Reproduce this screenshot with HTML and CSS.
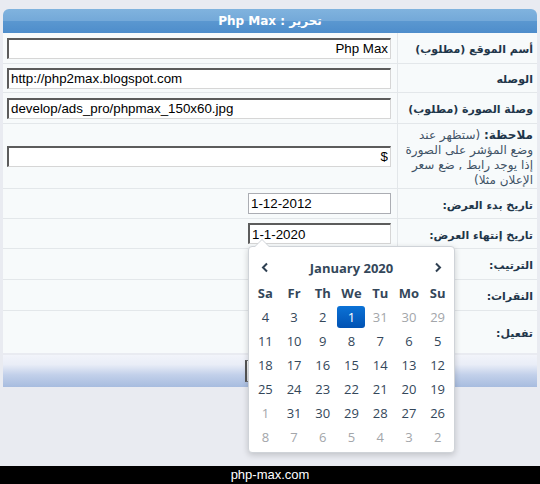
FILE: index.html
```html
<!DOCTYPE html>
<html lang="ar">
<head>
<meta charset="utf-8">
<title>تحرير</title>
<link rel="stylesheet" href="styles.css">
</head>
<body>
<div class="page">
  <div class="box" dir="rtl">
    <div class="box-head">تحرير : Php Max</div>
    <div class="form">
      <div class="lbl">أسم الموقع (مطلوب)</div>
      <div class="fld"><input class="txt" value="Php Max"></div>

      <div class="lbl">الوصله</div>
      <div class="fld"><input class="txt" dir="ltr" value="http://php2max.blogspot.com"></div>

      <div class="lbl">وصلة الصورة (مطلوب)</div>
      <div class="fld"><input class="txt" dir="ltr" value="develop/ads_pro/phpmax_150x60.jpg"></div>

      <div class="lbl note"><b>ملاحظة:</b> (ستظهر عند<br>وضع المؤشر على الصورة<br>إذا يوجد رابط , ضع سعر<br>الإعلان مثلا)</div>
      <div class="fld"><input class="txt" value="$"></div>

      <div class="lbl">تاريخ بدء العرض:</div>
      <div class="fld"><input class="date" dir="ltr" value="1-12-2012"></div>

      <div class="lbl">تاريخ إنتهاء العرض:</div>
      <div class="fld"><input class="date active" dir="ltr" value="1-1-2020"></div>

      <div class="lbl">الترتيب:</div>
      <div class="fld"></div>

      <div class="lbl">النقرات:</div>
      <div class="fld"></div>

      <div class="lbl last">تفعيل:</div>
      <div class="fld last"></div>
    </div>
  </div>
  <div class="bar"><button class="btn" type="button" aria-label="حفظ"></button></div>
</div>
<div class="footer">php-max.com</div>

<div class="cal">
  <div class="cal-grid">
    <div class="nav"><svg width="8" height="11" viewBox="0 0 8 11"><polyline points="6,1.5 2,5.5 6,9.5" fill="none" stroke="#2f4052" stroke-width="2"/></svg></div>
    <div class="month">January 2020</div>
    <div class="nav"><svg width="8" height="11" viewBox="0 0 8 11"><polyline points="2,1.5 6,5.5 2,9.5" fill="none" stroke="#2f4052" stroke-width="2"/></svg></div>

    <div class="dn">Sa</div><div class="dn">Fr</div><div class="dn">Th</div><div class="dn">We</div><div class="dn">Tu</div><div class="dn">Mo</div><div class="dn">Su</div>

    <div class="d">4</div><div class="d">3</div><div class="d">2</div><div class="d"><span class="sel">1</span></div><div class="d o">31</div><div class="d o">30</div><div class="d o">29</div>
    <div class="d">11</div><div class="d">10</div><div class="d">9</div><div class="d">8</div><div class="d">7</div><div class="d">6</div><div class="d">5</div>
    <div class="d">18</div><div class="d">17</div><div class="d">16</div><div class="d">15</div><div class="d">14</div><div class="d">13</div><div class="d">12</div>
    <div class="d">25</div><div class="d">24</div><div class="d">23</div><div class="d">22</div><div class="d">21</div><div class="d">20</div><div class="d">19</div>
    <div class="d o">1</div><div class="d">31</div><div class="d">30</div><div class="d">29</div><div class="d">28</div><div class="d">27</div><div class="d">26</div>
    <div class="d o">8</div><div class="d o">7</div><div class="d o">6</div><div class="d o">5</div><div class="d o">4</div><div class="d o">3</div><div class="d o">2</div>
  </div>
</div>
</body>
</html>
```

FILE: styles.css
```css
html, body {
  margin: 0;
  padding: 0;
}
body {
  width: 540px;
  height: 484px;
  background: #e9ebf1;
  display: flex;
  flex-direction: column;
  font-family: "DejaVu Sans", sans-serif;
  position: relative;
  overflow: hidden;
}
.page {
  flex: 1;
  padding: 9px 3px 0;
}
.box-head {
  height: 24px;
  line-height: 24px;
  border-radius: 6px 6px 0 0;
  background: linear-gradient(#80b3de 0%, #74a9d9 48%, #5a97d0 52%, #4e8dcb 100%);
  color: #fff;
  font-weight: bold;
  font-size: 12px;
  text-align: center;
}
.form {
  display: grid;
  grid-template-columns: 140px 1fr;
  grid-template-rows: 31px 29px 31px 65px 30px 30px 31px 31px 42px;
  background: #f7fafb;
}
.lbl {
  border-left: 1px solid #e3e7ea;
  border-bottom: 1px solid #e3e7ea;
  padding: 3px 4px 0 4px;
  display: flex;
  align-items: center;
  font-size: 11px;
  font-weight: bold;
  color: #1f364a;
  white-space: nowrap;
}
.lbl.note {
  display: block;
  padding-top: 4px;
  font-size: 12px;
  font-weight: normal;
  line-height: 15px;
  color: #3f5366;
  white-space: normal;
}
.lbl.note b {
  color: #1f364a;
}
.fld {
  border-bottom: 1px solid #e3e7ea;
  padding: 0 6px 0 4px;
  display: flex;
  align-items: center;
}
.lbl.last, .fld.last {
  border-bottom: none;
}
.txt, .date {
  font-family: "Liberation Sans", Arial, sans-serif;
  font-size: 13.33px;
  color: #000;
  background: #fff;
  box-sizing: border-box;
  margin: 0;
  padding: 1px 2px;
  outline: none;
}
.txt {
  width: 100%;
  height: 21px;
  border-top: 2px solid #5c5c5c;
  border-left: 2px solid #5c5c5c;
  border-right: 1px solid #d6d6d6;
  border-bottom: 1px solid #d6d6d6;
}
.date {
  width: 143px;
  height: 21px;
  border: 1px solid #abadb3;
}
.date.active {
  border-top: 2px solid #5c5c5c;
  border-left: 2px solid #5c5c5c;
  border-right: 1px solid #d6d6d6;
  border-bottom: 1px solid #d6d6d6;
}
.bar {
  margin-top: 2px;
  height: 32px;
  background: linear-gradient(#f2f4fa 0%, #e9edf7 30%, #c2d0ea 62%, #a7bcdf 100%);
  display: flex;
  justify-content: center;
  align-items: center;
}
.btn {
  width: 50px;
  height: 22px;
  margin: 0;
  border: 1px solid #707070;
  border-left: 2px solid #555;
  background: linear-gradient(#fbfbfb, #dcdcdc);
}
.footer {
  height: 18px;
  line-height: 18px;
  background: #000;
  color: #fff;
  text-align: center;
  font-family: "Liberation Sans", Arial, sans-serif;
  font-size: 13px;
}
.cal {
  position: absolute;
  left: 248px;
  top: 246px;
  width: 207px;
  height: 207px;
  box-sizing: border-box;
  background: #fff;
  border: 1px solid #cfd3d8;
  border-radius: 4px;
  box-shadow: 0 2px 6px rgba(0, 0, 0, 0.18);
  padding: 7px 2px 3px;
  font-family: "Open Sans", "Noto Sans", sans-serif;
  font-size: 13px;
  color: #34475a;
}
.cal::before {
  content: "";
  position: absolute;
  left: 5px;
  top: -8px;
  border-left: 8px solid transparent;
  border-right: 8px solid transparent;
  border-bottom: 8px solid #cfd3d8;
}
.cal::after {
  content: "";
  position: absolute;
  left: 6px;
  top: -7px;
  border-left: 7px solid transparent;
  border-right: 7px solid transparent;
  border-bottom: 7px solid #fff;
}
.cal-grid {
  display: grid;
  grid-template-columns: repeat(7, 1fr);
  grid-template-rows: 27px 24px repeat(6, 24px);
}
.nav {
  display: flex;
  align-items: center;
  justify-content: center;
}
.month {
  grid-column: span 5;
  display: flex;
  align-items: center;
  justify-content: center;
  font-weight: bold;
}
.dn {
  display: flex;
  align-items: center;
  justify-content: center;
  font-weight: bold;
}
.d {
  display: flex;
  align-items: center;
  justify-content: center;
}
.d.o {
  color: #a3a6aa;
}
.sel {
  width: 28px;
  height: 22px;
  border-radius: 3px;
  background: linear-gradient(#0b72d6, #0152b3);
  color: #fff;
  display: flex;
  align-items: center;
  justify-content: center;
}
```
